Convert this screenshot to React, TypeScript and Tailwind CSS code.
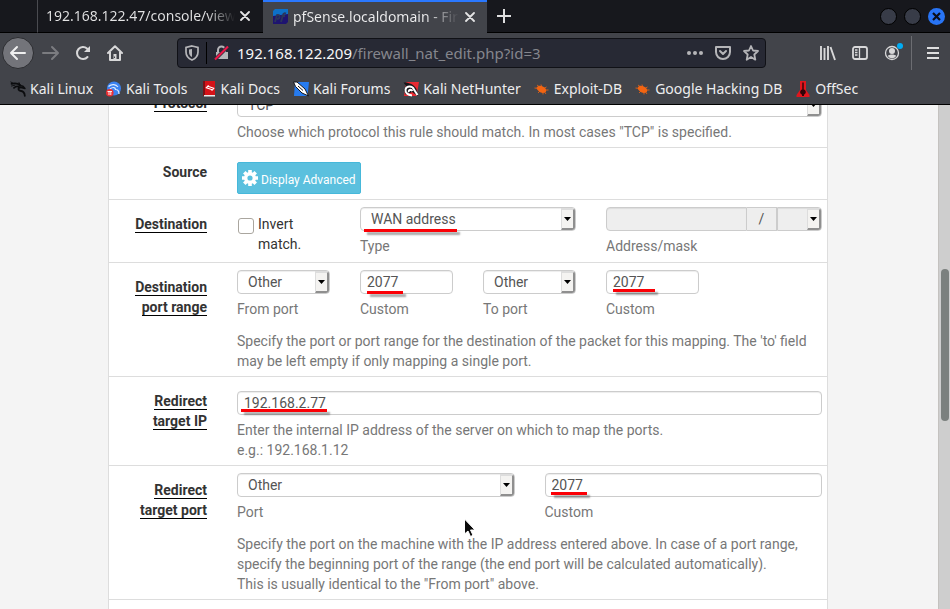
import type { ReactNode } from "react";

type FieldProps = { id: string; help: string; children: ReactNode; className?: string };

function Field({ id, help, children, className = "" }: FieldProps) {
  return (
    <div className={`flex min-w-0 flex-col gap-[5px] ${className}`}>
      {children}
      <label htmlFor={id} className="text-[#777777]">{help}</label>
    </div>
  );
}

/** Underline marker drawn over a value to call it out. */
function Mark({ className }: { className: string }) {
  return <span aria-hidden="true" className={`pointer-events-none absolute h-[3px] bg-[#fb0006] shadow-[3px_3px_2px_rgba(0,0,0,0.35)] ${className}`} />;
}

function TextBox({ id, value, mark }: { id: string; value: string; mark: string }) {
  return (
    <div className="relative flex">
      <input id={id} type="text" defaultValue={value} className="h-6 w-full min-w-0 rounded-[4px] border border-[#cccccc] bg-white px-[6px] text-[#555555] shadow-[inset_0_1px_1px_rgba(0,0,0,0.075)]" />
      <Mark className={mark} />
    </div>
  );
}

type PickProps = { id: string; value: string; mark?: string; disabled?: boolean; box?: string; label?: string };

function Pick({ id, value, mark, disabled = false, box = "rounded-[4px] bg-white", label }: PickProps) {
  return (
    <div className="relative flex">
      <select id={id} aria-label={label} disabled={disabled} className={`h-6 w-full min-w-0 appearance-none border border-[#cccccc] pr-[16px] pl-[10px] text-[#555555] opacity-100 shadow-[inset_0_1px_1px_rgba(0,0,0,0.075)] ${box}`}>
        <option>{value}</option>
      </select>
      <span aria-hidden="true" className="pointer-events-none absolute top-px right-px flex h-[22px] w-[14px] items-center justify-center rounded-r-[3px] border-t-2 border-r-2 border-b-2 border-l border-t-[#dddddd] border-r-[#8f8f8f] border-b-[#8f8f8f] border-l-[#dddddd] bg-[#f4f3f1]">
        <svg width="7" height="4" viewBox="0 0 7 4"><path d="M0 0H7L3.5 4Z" fill="#000" /></svg>
      </span>
      {mark && <Mark className={mark} />}
    </div>
  );
}

type RowProps = { label: string; plain?: boolean; top?: string; children: ReactNode };

function Row({ label, plain = false, top = "pt-[7px]", children }: RowProps) {
  return (
    <div className="flex gap-[30px] border-b border-[#dddddd] pr-[5px] pl-[5px]">
      <div className="w-[93px] shrink-0 pt-[14px] text-right font-bold text-[#333333]">
        <span className={plain ? "" : "border-b border-black"}>{label}</span>
      </div>
      <div className={`min-w-0 flex-1 pb-[5px] ${top}`}>{children}</div>
    </div>
  );
}

function Dragon({ color }: { color: string }) {
  return (
    <g fill="none" stroke={color} strokeLinecap="round" strokeLinejoin="round">
      <path d="M1.500 2.800C5 1.800 8.500 2.600 10.500 4.500M4 6.800C6 5 8 5 9.500 6.500C7.500 8 8.500 9.800 11 10C13.500 10.300 14.600 12 14.800 14.800" strokeWidth="1.8" />
      <path d="M9.500 4.500L13 5.200L15 7.500L12 6.800L9.500 6.500" strokeWidth="1.4" />
      <path d="M0.8 1L4 2.600M1.500 5L5 4.200M10 3.500L9 1.500" strokeWidth="0.9" />
    </g>
  );
}

function Bug() {
  return (
    <>
      <ellipse cx="7.5" cy="8.3" rx="5" ry="3.2" transform="rotate(25 7.5 8.3)" fill="#f26412" />
      <path d="M0.500 7L5 7.500M3 4L7 7M7 3.500L8 7M4 12L7 9M9 13.500V9M12 13L9 9M14.500 9L10 9M12.500 6L9 8" stroke="#f26412" strokeWidth="0.8" />
    </>
  );
}

const bookmarks: { name: string; icon: ReactNode }[] = [
  { name: "Kali Linux", icon: <Dragon color="#0b0c0e" /> },
  {
    name: "Kali Tools",
    icon: (
      <>
        <circle cx="8" cy="7.500" r="7" fill="#3b82f0" />
        <path d="M2.500 5.500C6 2.500 10 3.500 12 6M4 8C7 5.500 9.500 6.500 9.500 8.500C12 8.500 13 10.500 13 13" fill="none" stroke="#dceaff" strokeWidth="1.2" />
        <circle cx="3.800" cy="11.800" r="3.800" fill="#ec2f33" />
        <path d="M1.500 10.500H6M3 10.500V14M4.800 10.500V14" stroke="#fff" strokeWidth="0.9" />
      </>
    ),
  },
  {
    name: "Kali Docs",
    icon: (
      <>
        <path d="M3 0H14V14H3Z" fill="#d51218" />
        <path d="M2 0H4V15H2Z" fill="#791015" />
        <path d="M3 14H14V15.5H3Z" fill="#e9e9ea" />
        <path d="M7.500 4.500L5.300 6.800L10.500 8.500M11 9.500L12.800 7.200L7.500 5.500M7.500 4.500V6M10.500 9.500V8" fill="none" stroke="#fff" strokeWidth="1.1" />
      </>
    ),
  },
  {
    name: "Kali Forums",
    icon: (
      <>
        <path d="M2 1H16L14.500 15H1Z" fill="#267bef" />
        <path d="M0.500 1L4 1L12 8L15.500 15L9 12L2.500 5.500Z" fill="#fff" stroke="#15171b" strokeWidth="1" />
        <path d="M5 5L10 9.500" stroke="#15171b" strokeWidth="1" />
      </>
    ),
  },
  {
    name: "Kali NetHunter",
    icon: (
      <>
        <path d="M3 1H16L13.500 15H1Z" fill="#e92a32" />
        <path d="M0.500 1.500C5 1 11 3 13.500 8L15 15L9 11L3 14L0.500 9L3 5Z" fill="#15171b" />
        <path d="M9 14.500C5 14 2 12 2.500 8.500C3.500 4.500 9.500 4.500 11 8.500L14.500 14M6 11C5 9 8 8 9.500 10" fill="none" stroke="#fff" strokeWidth="2" />
      </>
    ),
  },
  { name: "Exploit-DB", icon: <Bug /> },
  { name: "Google Hacking DB", icon: <Bug /> },
  {
    name: "OffSec",
    icon: (
      <>
        <path d="M5 0H11V9L14.500 14V16H1.500V14L5 9Z" fill="#e0161d" />
        <path d="M7.300 1.500H8.700V8.500C11.500 9 11.500 13 9 13.500V15H7V13.500C4.500 13 4.500 9 7.300 8.500Z" fill="#300508" />
      </>
    ),
  },
];

function CloseGlyph() {
  return <svg width="10" height="10" viewBox="0 0 10 10"><path d="M1 1L9 9M9 1L1 9" stroke="#e4e4e5" strokeWidth="1.8" strokeLinecap="round" /></svg>;
}

const line = { fill: "none", stroke: "#d8d8d9", strokeWidth: 2, strokeLinecap: "round", strokeLinejoin: "round" } as const;

function Tabs() {
  return (
    <div className="flex h-[33px] bg-[#17181d]">
      <div className="w-[38px] shrink-0 border-r border-b border-r-[#4a4b50] border-b-black" />
      <div className="flex w-[225px] shrink-0 items-center gap-[5px] border-b border-black pr-[13px] pl-2">
        <span className="min-w-0 flex-1 overflow-hidden bg-gradient-to-r from-[#e4e4e5] from-85% to-transparent bg-clip-text whitespace-nowrap text-transparent">192.168.122.47/console/view</span>
        <button aria-label="Close console tab"><CloseGlyph /></button>
      </div>
      <div className="flex w-[224px] shrink-0 items-center border-t-2 border-[#2a78ff] bg-[#42444a] pr-[12px] pb-[2px] pl-[10px]">
        <svg className="mr-[5px] shrink-0" width="15" height="15" viewBox="0 0 15 15">
          <path d="M2 0H15V8H0V2Z" fill="#0d70c8" />
          <path d="M0 7L15 5V13L13 15H0Z" fill="#1e1470" />
          <path d="M2 13L4 6C8 5 7 10 4 10M8 13L10 6C10.500 4 12 4 13 4.500M8.500 7H12" fill="none" stroke="#2b3659" strokeWidth="1.800" />
        </svg>
        <span className="min-w-0 flex-1 overflow-hidden bg-gradient-to-r from-[#eeeeef] from-80% to-transparent bg-clip-text whitespace-nowrap text-transparent">pfSense.localdomain - Firewall</span>
        <button aria-label="Close pfSense tab" className="ml-[6px]"><CloseGlyph /></button>
      </div>
      <div className="flex flex-1 items-center justify-between border-b border-black pr-[5px] pl-[10px]">
        <button aria-label="New tab"><svg width="14" height="14" viewBox="0 0 14 14"><path d="M7 0V14M0 7H14" stroke="#dededf" strokeWidth="2" /></svg></button>
        <div className="flex gap-[7px]">
          <button aria-label="Minimize" className="size-[17px] rounded-full border border-black bg-[#383c48]" />
          <button aria-label="Maximize" className="size-[17px] rounded-full border border-black bg-[#383c48]" />
          <button aria-label="Close window" className="flex size-[17px] items-center justify-center rounded-full bg-[#2874f5]">
            <svg width="9" height="9" viewBox="0 0 9 9"><path d="M1 1L8 8M8 1L1 8" stroke="#0b0e18" strokeWidth="2.200" /></svg>
          </button>
        </div>
      </div>
    </div>
  );
}

function NavBar() {
  return (
    <div className="flex h-10 items-center pr-[11px] pl-[2px]">
      <button aria-label="Back" className="flex size-8 items-center justify-center rounded-full border border-[#2c2d31] bg-[#73747a]">
        <svg width="18" height="16" viewBox="0 0 18 16"><path d="M16 8H2M8 2L2 8L8 14" {...line} stroke="#f0f0f0" /></svg>
      </button>
      <button aria-label="Forward" className="ml-2"><svg width="18" height="16" viewBox="0 0 18 16"><path d="M1 8H15M10 2L16 8L10 14" {...line} stroke="#7b7c80" /></svg></button>
      <button aria-label="Reload" className="ml-[15px]">
        <svg width="16" height="16" viewBox="0 0 16 16"><path d="M12.500 12A6 6 0 1 1 12 3.500L14 6" {...line} /><path d="M15 1V7H9Z" fill="#d8d8d9" /></svg>
      </button>
      <button aria-label="Home" className="ml-4">
        <svg width="16" height="16" viewBox="0 0 16 16"><path d="M1 8L8 1.300L15 8M3 7V15H13V7" {...line} /><path d="M6.500 9H9.500V15H6.500Z" fill="#d8d8d9" /><path d="M7.500 11.500V13" stroke="#42444a" /></svg>
      </button>
      <div className="ml-[54px] flex h-[30px] min-w-0 flex-1 items-center rounded-[4px] border border-[#101116] bg-[#272934] pr-[6px] pl-[7px]">
        <button aria-label="Tracking protection">
          <svg width="14" height="16" viewBox="0 0 14 16"><path d="M7 1L13 2.500V7C13 11 10.500 13.500 7 15C3.500 13.500 1 11 1 7V2.500Z" fill="none" stroke="#b5b5b8" strokeWidth="1.700" /><path d="M7 4V12C5 11 4 9.500 4 7V4.500Z" fill="#b5b5b8" /></svg>
        </button>
        <span className="mx-[7px] h-[22px] w-px bg-black" />
        <button aria-label="Connection not secure">
          <svg width="15" height="16" viewBox="0 0 15 16"><path d="M4 8V5A3.500 3.500 0 0 1 11 5V8" fill="none" stroke="#b5b5b8" strokeWidth="2" /><path d="M2 7H14V14H2Z" fill="#b5b5b8" /><path d="M1 14.500L14 1.500" stroke="#272934" strokeWidth="3.600" /><path d="M1 14.500L14 1.500" stroke="#ec1748" strokeWidth="2.200" /></svg>
        </button>
        <a href="#url" className="ml-2 min-w-0 flex-1 truncate text-[15px] text-[#f7f7f8]">192.168.122.209<span className="text-[#85868d]">/firewall_nat_edit.php?id=3</span></a>
        <button aria-label="Page actions"><svg width="16" height="4" viewBox="0 0 16 4"><g fill="#b5b5b8"><circle cx="2" cy="2" r="2" /><circle cx="8" cy="2" r="2" /><circle cx="14" cy="2" r="2" /></g></svg></button>
        <button aria-label="Save to Pocket" className="ml-3"><svg width="16" height="14" viewBox="0 0 16 14"><path d="M1 1H15V6A7 7 0 0 1 1 6ZM5 5L8 8L11 5" {...line} stroke="#b5b5b8" /></svg></button>
        <button aria-label="Bookmark this page" className="ml-3"><svg width="16" height="16" viewBox="0 0 16 16"><path d="M8 1L10 5.500L15 6L11.300 9.500L12.300 14.700L8 12L3.700 14.700L4.700 9.500L1 6L6 5.500Z" {...line} strokeWidth="1.800" stroke="#b5b5b8" /></svg></button>
      </div>
      <button aria-label="Library" className="ml-[54px]"><svg width="16" height="16" viewBox="0 0 16 16"><path d="M1 1V15M4.500 3V15M8 1V15M10.500 2L15 15" stroke="#d8d8d9" strokeWidth="1.900" /></svg></button>
      <button aria-label="Sidebars" className="ml-4"><svg width="16" height="14" viewBox="0 0 16 14"><rect x="1" y="1" width="14" height="12" rx="2" {...line} strokeWidth="1.800" /><path d="M7.500 1V13M3 4H5.500M3 6.500H5.500M3 9H5.500" stroke="#d8d8d9" strokeWidth="1.300" /></svg></button>
      <button aria-label="Account" className="ml-4">
        <svg width="20" height="20" viewBox="0 0 20 20"><circle cx="8" cy="10" r="6.500" {...line} strokeWidth="1.300" /><circle cx="8" cy="8" r="3" fill="#d8d8d9" /><path d="M3.800 13C5 11 11 11 12.200 13A5 5 0 0 1 3.800 13Z" fill="#d8d8d9" /><circle cx="16" cy="3" r="3" fill="#00adf5" /></svg>
      </button>
      <span className="ml-[7px] h-[34px] w-px bg-[#6c6d72]" />
      <button aria-label="Open menu" className="ml-[15px]"><svg width="12" height="12" viewBox="0 0 12 12"><path d="M0 1H12M0 6H12M0 11H12" stroke="#dededf" strokeWidth="2" /></svg></button>
    </div>
  );
}

export default function App() {
  return (
    <div className="flex h-screen flex-col overflow-hidden bg-[#f4f4f4]">
      <header className="shrink-0 border-b border-black bg-[#42444a] font-['Noto_Sans',sans-serif] text-sm leading-5 text-[#eeeeef]">
        <Tabs />
        <NavBar />
        <nav className="flex h-[31px] items-center gap-[13px] overflow-hidden pl-[10px] whitespace-nowrap">
          {bookmarks.map((b) => (
            <a key={b.name} href="#bookmark" className="flex items-center gap-1">
              <svg className="shrink-0" width="16" height="16" viewBox="0 0 16 16">{b.icon}</svg>
              {b.name}
            </a>
          ))}
        </nav>
      </header>

      <div className="flex min-h-0 flex-1">
        <main className="min-w-0 flex-1 overflow-hidden pr-[2px] font-[Roboto,sans-serif] text-sm leading-5 text-[#333333]">
          <form className="mx-auto -mt-[26px] min-h-[560px] max-w-[720px] border-x border-[#dddddd] bg-white">
            <Row label="Protocol" top="pt-[14px]">
              <Field id="protocol" help={'Choose which protocol this rule should match. In most cases "TCP" is specified.'}>
                <Pick id="protocol" value="TCP" />
              </Field>
            </Row>

            <Row label="Source" plain top="pt-[14px]">
              <button type="button" className="flex h-8 items-center gap-[3px] rounded-[2px] border border-[#46b8da] bg-[#5bc0de] px-[4px] text-xs text-white">
                <svg width="16" height="16" viewBox="0 0 16 16">
                  <g stroke="#fff" strokeWidth="3.600"><path d="M8 0V3M8 13V16M0 8H3M13 8H16M2.300 2.300L4.500 4.500M11.500 11.500L13.700 13.700M2.300 13.700L4.500 11.500M11.500 4.500L13.700 2.300" /></g>
                  <circle cx="8" cy="8" r="4.300" fill="none" stroke="#fff" strokeWidth="3.400" />
                </svg>
                <span className="pt-[3px]">Display Advanced</span>
              </button>
            </Row>

            <Row label="Destination">
              <div className="grid grid-cols-5 gap-x-[30px] pb-px">
                <label className="flex items-start gap-1 pt-[7px]">
                  <input type="checkbox" className="mt-[4px] ml-px size-4 shrink-0 appearance-none rounded-[3px] border border-[#aaa69f] bg-white" />
                  <span>Invert match.</span>
                </label>
                <Field id="dst-type" help="Type" className="col-span-2">
                  <Pick id="dst-type" value="WAN address" mark="top-[22px] left-[4px] w-[93px]" />
                </Field>
                <Field id="dst-address" help="Address/mask" className="col-span-2">
                  <div className="flex">
                    <input id="dst-address" type="text" disabled className="h-6 min-w-0 flex-1 rounded-l-[4px] border border-[#cccccc] bg-[#eeeeee] px-[6px] shadow-[inset_0_1px_1px_rgba(0,0,0,0.075)]" />
                    <span className="flex w-[30px] items-center justify-center border-y border-r border-[#cccccc] bg-[#eeeeee] text-[#555555]">/</span>
                    <div className="w-[45px]"><Pick id="dst-mask" label="Mask" value="" disabled box="rounded-r-[4px] bg-[#eeeeee]" /></div>
                  </div>
                </Field>
              </div>
            </Row>

            <Row label="Destination port range">
              <div className="grid grid-cols-5 gap-x-[30px]">
                <Field id="from-port" help="From port"><Pick id="from-port" value="Other" /></Field>
                <Field id="from-custom" help="Custom"><TextBox id="from-custom" value="2077" mark="top-[21px] left-[7px] w-[36px]" /></Field>
                <Field id="to-port" help="To port"><Pick id="to-port" value="Other" /></Field>
                <Field id="to-custom" help="Custom"><TextBox id="to-custom" value="2077" mark="top-[19px] left-[7px] w-[42px]" /></Field>
              </div>
              <p className="mt-3 text-[#777777]">Specify the port or port range for the destination of the packet for this mapping. The 'to' field may be left empty if only mapping a single port.</p>
            </Row>

            <Row label="Redirect target IP" top="pt-[14px]">
              <TextBox id="target-ip" value="192.168.2.77" mark="top-[18px] left-[4px] w-[86px]" />
              <label htmlFor="target-ip" className="mt-[5px] block text-[#777777]">
                Enter the internal IP address of the server on which to map the ports.<br />e.g.: 192.168.1.12
              </label>
            </Row>

            <Row label="Redirect target port">
              <div className="grid grid-cols-2 gap-x-[30px]">
                <Field id="target-port" help="Port"><Pick id="target-port" value="Other" /></Field>
                <Field id="target-custom" help="Custom"><TextBox id="target-custom" value="2077" mark="top-[19px] left-[6px] w-[36px]" /></Field>
              </div>
              <p className="mt-3 text-[#777777]">
                Specify the port on the machine with the IP address entered above. In case of a port range, specify the beginning port of the range (the end port will be calculated automatically).<br />
                This is usually identical to the "From port" above.
              </p>
            </Row>
          </form>
        </main>
        <div aria-hidden="true" className="flex w-3 shrink-0 justify-center border-l border-[#c4c2bf] bg-[#cecece] pt-[164px]">
          <div className="h-[152px] w-2 rounded-full bg-[#7b807e]" />
        </div>
      </div>

      <svg aria-hidden="true" className="pointer-events-none absolute top-[518px] left-[463px]" width="14" height="20" viewBox="0 0 14 20">
        <path d="M1.500 1V16L5 13L7.500 18.500L10 17.300L7.500 12H12Z" fill="#0a0a0a" stroke="#fff" strokeWidth="1" />
      </svg>
    </div>
  );
}
